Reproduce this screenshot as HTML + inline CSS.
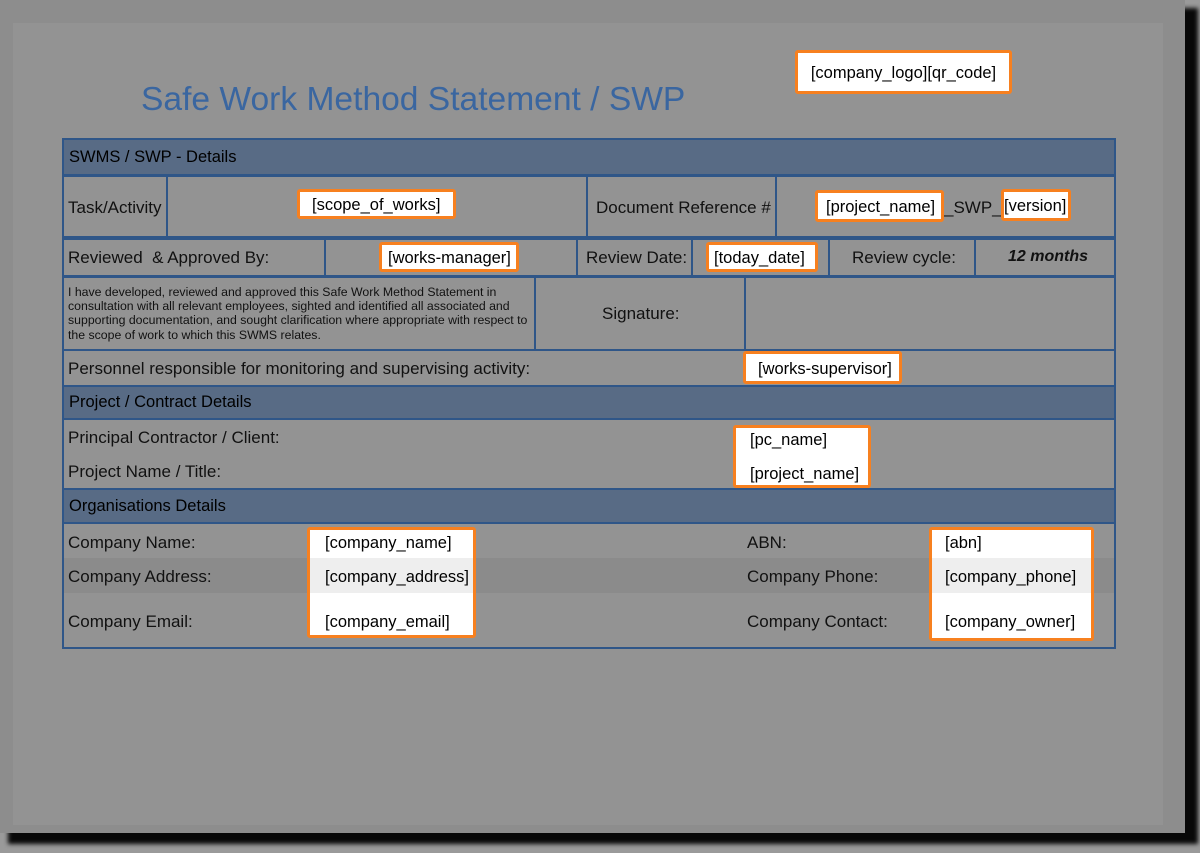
<!DOCTYPE html>
<html><head><meta charset="utf-8"><style>
*{margin:0;padding:0;box-sizing:border-box}
body{width:1200px;height:853px;background:#9a9a9a;position:relative;overflow:hidden;font-family:"Liberation Sans",Arial,sans-serif;color:#111}
.a{position:absolute}
.shadow{left:8px;top:8px;width:1190px;height:836px;background:#080808;filter:blur(2px)}
.outer{left:0;top:0;width:1185px;height:833px;background:#8d8d8d}
.page{left:13px;top:23px;width:1150px;height:802px;background:#939393}
.hdr{background:#586b85;border:2px solid #2f5688;font-size:16.5px;padding-left:5px;display:flex;align-items:center;color:#000}
.box{border:2px solid #2f5688}
.vl{width:2px;background:#2f5688}
.t{font-size:17px;white-space:nowrap}
.ob{border:3px solid #f7801f;background:#fff;border-radius:3px;font-size:16.5px;white-space:nowrap;display:flex;align-items:center;color:#000;padding-top:3px}
</style></head><body>
<div class="a shadow"></div>
<div class="a outer"></div>
<div class="a page"></div>

<div class="a" style="left:141px;top:81px;font-size:33.6px;color:#3a66a0;white-space:nowrap">Safe Work Method Statement / SWP</div>
<div class="a ob" style="left:795px;top:50px;width:217px;height:44px;justify-content:center;font-size:16.5px">[company_logo][qr_code]</div>

<div class="a box" style="left:62px;top:138px;width:1054px;height:511px"></div>
<div class="a hdr" style="left:62px;top:138px;width:1054px;height:38px">SWMS / SWP - Details</div>

<div class="a box" style="left:62px;top:175px;width:1054px;height:63px"></div>
<div class="a vl" style="left:166px;top:175px;height:63px"></div>
<div class="a vl" style="left:586px;top:175px;height:63px"></div>
<div class="a vl" style="left:775px;top:175px;height:63px"></div>
<div class="a t" style="left:68px;top:198px">Task/Activity</div>
<div class="a t" style="left:596px;top:198px">Document Reference #</div>
<div class="a t" style="left:944px;top:198px">_SWP_v</div>

<div class="a box" style="left:62px;top:238px;width:1054px;height:39px"></div>
<div class="a vl" style="left:324px;top:238px;height:39px"></div>
<div class="a vl" style="left:576px;top:238px;height:39px"></div>
<div class="a vl" style="left:691px;top:238px;height:39px"></div>
<div class="a vl" style="left:828px;top:238px;height:39px"></div>
<div class="a vl" style="left:974px;top:238px;height:39px"></div>
<div class="a t" style="left:68px;top:248px">Reviewed &nbsp;&amp; Approved By:</div>
<div class="a t" style="left:586px;top:248px">Review Date:</div>
<div class="a t" style="left:852px;top:248px">Review cycle:</div>
<div class="a t" style="left:1008px;top:248px;font-style:italic;font-weight:bold;font-size:16px">12 months</div>

<div class="a box" style="left:62px;top:276px;width:1054px;height:75px"></div>
<div class="a vl" style="left:534px;top:276px;height:75px"></div>
<div class="a vl" style="left:744px;top:276px;height:75px"></div>
<div class="a" style="left:68px;top:285px;font-size:12.3px;line-height:14.2px;width:462px">I have developed, reviewed and approved this Safe Work Method Statement in consultation with all relevant employees, sighted and identified all associated and supporting documentation, and sought clarification where appropriate with respect to the scope of work to which this SWMS relates.</div>
<div class="a t" style="left:602px;top:304px">Signature:</div>

<div class="a t" style="left:68px;top:359px">Personnel responsible for monitoring and supervising activity:</div>

<div class="a hdr" style="left:62px;top:385px;width:1054px;height:35px">Project / Contract Details</div>
<div class="a t" style="left:68px;top:428px">Principal Contractor / Client:</div>
<div class="a t" style="left:68px;top:462px">Project Name / Title:</div>

<div class="a hdr" style="left:62px;top:488px;width:1054px;height:36px">Organisations Details</div>
<div class="a" style="left:64px;top:558px;width:1050px;height:35px;background:#8b8b8b"></div>
<div class="a t" style="left:68px;top:533px">Company Name:</div>
<div class="a t" style="left:68px;top:567px">Company Address:</div>
<div class="a t" style="left:68px;top:612px">Company Email:</div>
<div class="a t" style="left:747px;top:533px">ABN:</div>
<div class="a t" style="left:747px;top:567px">Company Phone:</div>
<div class="a t" style="left:747px;top:612px">Company Contact:</div>

<div class="a ob" style="left:297px;top:189px;width:159px;height:30px;padding-left:12px">[scope_of_works]</div>
<div class="a ob" style="left:815px;top:190px;width:129px;height:32px;padding-left:8px">[project_name]</div>
<div class="a ob" style="left:1001px;top:189px;width:70px;height:32px;padding-left:0px">[version]</div>
<div class="a ob" style="left:379px;top:242px;width:140px;height:30px;padding-left:6px">[works-manager]</div>
<div class="a ob" style="left:706px;top:242px;width:112px;height:30px;padding-left:5px">[today_date]</div>
<div class="a ob" style="left:743px;top:351px;width:159px;height:33px;padding-left:12px">[works-supervisor]</div>
<div class="a ob" style="left:733px;top:425px;width:138px;height:63px;display:block;padding-left:14px">
  <div style="position:absolute;top:3px">[pc_name]</div><div style="position:absolute;top:37px">[project_name]</div></div>
<div class="a ob" style="left:307px;top:527px;width:169px;height:111px;display:block;overflow:hidden">
  <div style="position:absolute;left:0;top:28px;width:100%;height:35px;background:#eee"></div>
  <div style="position:absolute;left:15px;top:4px">[company_name]</div>
  <div style="position:absolute;left:15px;top:38px">[company_address]</div>
  <div style="position:absolute;left:15px;top:83px">[company_email]</div></div>
<div class="a ob" style="left:929px;top:527px;width:165px;height:114px;display:block;overflow:hidden">
  <div style="position:absolute;left:0;top:28px;width:100%;height:35px;background:#eee"></div>
  <div style="position:absolute;left:13px;top:4px">[abn]</div>
  <div style="position:absolute;left:13px;top:38px">[company_phone]</div>
  <div style="position:absolute;left:13px;top:83px">[company_owner]</div></div>
</body></html>
